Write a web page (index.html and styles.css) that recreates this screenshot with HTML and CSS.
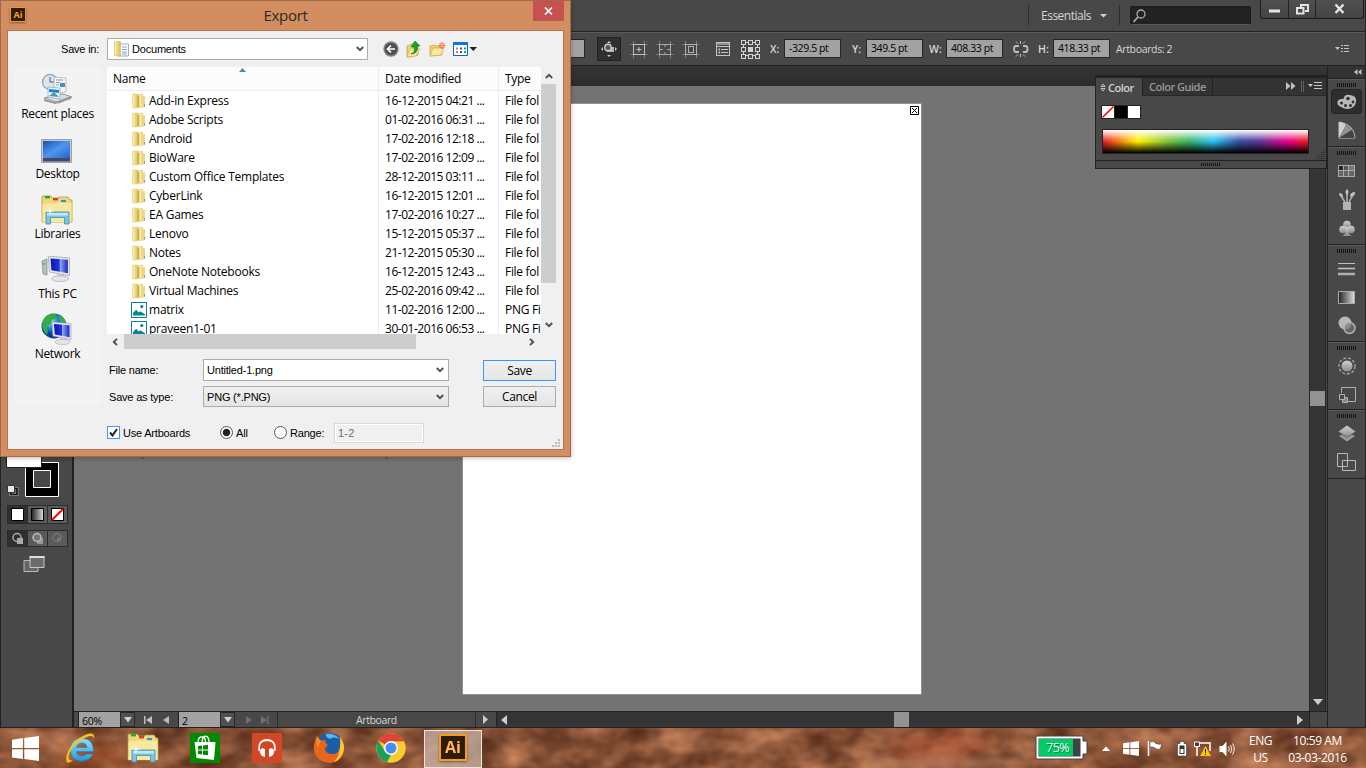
FILE: index.html
```html
<!DOCTYPE html>
<html lang="en">
<head>
<meta charset="utf-8">
<title>Export</title>
<link rel="stylesheet" href="styles.css">
</head>
<body>
<svg class="defs" width="0" height="0">
  <defs>
    <linearGradient id="gFold" x1="0" x2="1"><stop offset="0" stop-color="#fff3b0"/><stop offset="1" stop-color="#d9bb53"/></linearGradient>
    <linearGradient id="gGray" x1="0" x2="0" y1="0" y2="1"><stop offset="0" stop-color="#d0d0d0"/><stop offset="1" stop-color="#8c8c8c"/></linearGradient>
    <linearGradient id="gBW" x1="0" x2="1"><stop offset="0" stop-color="#222"/><stop offset="1" stop-color="#ddd"/></linearGradient>
    <linearGradient id="gScreen" x1="0" x2="1" y1="0" y2="1"><stop offset="0" stop-color="#1c4fb8"/><stop offset=".5" stop-color="#4d97ec"/><stop offset="1" stop-color="#2a62cc"/></linearGradient>
    <linearGradient id="gPc" x1="0" x2="1"><stop offset="0" stop-color="#0912b4"/><stop offset=".5" stop-color="#1e38dc"/><stop offset=".55" stop-color="#8fa6f5"/><stop offset="1" stop-color="#1424c4"/></linearGradient>
    <radialGradient id="gGlobe" cx=".35" cy=".3"><stop offset="0" stop-color="#a8e8ff"/><stop offset=".6" stop-color="#1f86d8"/><stop offset="1" stop-color="#0b3f96"/></radialGradient>
    <linearGradient id="gIe" x1="0" x2="0" y1="0" y2="1"><stop offset="0" stop-color="#8be0fb"/><stop offset="1" stop-color="#1c9be0"/></linearGradient>
    <symbol id="folder" viewBox="0 0 14 16">
      <path d="M.5 1h5l1 1v12l-2 1h-4z" fill="url(#gFold)" stroke="#e8cf78" stroke-width=".6"/>
      <path d="M6 1.500l5-.8v2.600h2v10.700l-6.600 1.500z" fill="#ebd681"/>
      <path d="M5.600 3v11.800l1.300-1.500V3z" fill="#c2a54c"/><path d="M7.500 2.300l2-.5v12.300l-2 .6z" fill="#f7eaa8"/>
      <path d="M12.600 11v2.500" stroke="#4ba3c7" stroke-width=".9"/>
    </symbol>
    <symbol id="picture" viewBox="0 0 16 16">
      <rect x=".5" y=".5" width="15" height="15" fill="#fff" stroke="#0e8294"/>
      <path d="M2 13.500V11l3.200-3.200 2.600 2.700 1.500-1.200 4.700 3v1.200z" fill="#0e8294"/><circle cx="10.800" cy="4.600" r="1.600" fill="#0e8294"/>
    </symbol>
    <symbol id="library" viewBox="0 0 32 30">
      <path d="M1 4V2q0-1 1-1h8l2 2h6V2h9l2 3h2v22H1z" fill="#f0d878" stroke="#b49746" stroke-width=".8"/>
      <path d="M4 1h5v2.400H4z" fill="#12b22c"/><path d="M12 3h5v2.400h-5z" fill="#dc3b2c"/><path d="M20 5h5v2.400h-5z" fill="#2a95e8"/>
      <path d="M1.500 9q14-3 29-1v19h-29z" fill="#f8e89c"/>
      <path d="M5 17h23v12h-4.500v-6.500h-14V29H5z" fill="#7cc4e3" stroke="#4c96bd" stroke-width=".9"/><path d="M6 18h21v2.500H6z" fill="#c1e9f8"/>
      <path d="M9 11l.8 4.200L14 16l-4.200.8L9 21l-.8-4.200L4 16l4.200-.8z" fill="#fff"/>
    </symbol>
    <symbol id="winlogo" viewBox="0 0 26 24">
      <path d="M0 3.500L10.500 2v9.500H0zM11.800 1.800L26 0v11.500H11.800zM0 12.700h10.500V22L0 20.600zM11.800 12.700H26V24l-14.200-2z" fill="#fff"/>
    </symbol>
    <symbol id="chev" viewBox="0 0 8 6"><path d="M.8 1l3.200 3.200L7.200 1" fill="none" stroke="#505050" stroke-width="1.900"/></symbol>
    <symbol id="grip" viewBox="0 0 20 4"><path d="M0 2h20" stroke="#151515" stroke-width="4" stroke-dasharray="1 1"/></symbol>
    <symbol id="monitor" viewBox="0 0 22 25">
      <path d="M1 2l19 1.500v16L2 16z" fill="#e4e6ea" stroke="#a4a8b0" stroke-width=".7"/><path d="M3 4l15.500 1.200v12L3.800 14.400z" fill="url(#gPc)"/>
      <path d="M9 18l6 1v3l-6-1z" fill="#bfc3c8"/><ellipse cx="11.500" cy="22" rx="7.500" ry="2.600" fill="#e4e5e8" stroke="#a9abb0" stroke-width=".6"/>
    </symbol>
  </defs>
</svg>

<div class="app">
  <header class="topbar">
    <div class="workspace">Essentials <svg width="7" height="5"><path d="M0 1h7L3.500 4.500z" fill="#d0d0d0"/></svg></div>
    <div class="search"><svg width="14" height="14" fill="none" stroke="#aaa"><circle cx="8" cy="5" r="4" stroke-width="1.300"/><path d="M5 8l-4.500 5" stroke-width="1.800"/></svg></div>
    <div class="winbtns">
      <span class="wb wb-min"><svg width="11" height="14"><path d="M0 7.500h11v3H0z" fill="#e4e4e4"/></svg></span>
      <span class="wb wb-max"><svg width="13" height="11" fill="none" stroke="#e4e4e4" stroke-width="2"><path d="M5 3V1h7v6H9M1 4h6.500v5.500H1z"/></svg></span>
      <span class="wb wb-close"><svg width="12" height="10" stroke="#e4e4e4" stroke-width="2.400"><path d="M1.500.5l8 8.500M9.500.5l-8 8.500"/></svg></span>
    </div>
  </header>

  <div class="controlbar">
    <span class="field f-hidden"></span>
    <span class="toolbox"><svg width="18" height="18"><path d="M9 1l2 2H7zM9 17l2-2H7zM1 9l2-2v4zM17 9l-2-2v4z" fill="#c8c8c8"/><path d="M7 7h7v5H7z" fill="#b4b4b4"/><circle cx="8" cy="7.500" r="3.200" fill="#555" stroke="#ccc" stroke-width="1.400"/></svg></span>
    <svg class="cicon" width="26" height="18" fill="none" stroke="#c0c0c0"><path d="M4.500 4.500h3M18.500 4.500h3M4.500 14.500h3M18.500 14.500h3M7.500 1v3M18.500 1v3M7.500 15v3M18.500 15v3" stroke="#808080"/><rect x="7.500" y="4.500" width="11" height="10"/><path d="M13 7v5M10.500 9.500h5"/></svg>
    <svg class="cicon" width="26" height="18" fill="none" stroke="#a8a8a8"><path d="M4.500 4.500h3M18.500 4.500h3M4.500 14.500h3M18.500 14.500h3M7.500 1v3M18.500 1v3M7.500 15v3M18.500 15v3" stroke="#808080"/><rect x="7.500" y="4.500" width="11" height="10"/><path d="M13 4v3M13 12v3M8 9.500h3M15 9.500h3"/></svg>
    <svg class="cicon" width="26" height="18" fill="none" stroke="#b0b0b0"><path d="M4.500 4.500h3M18.500 4.500h3M4.500 14.500h3M18.500 14.500h3M7.500 1v3M18.500 1v3M7.500 15v3M18.500 15v3" stroke="#808080"/><rect x="7.500" y="4.500" width="11" height="10"/><rect x="10.500" y="6.500" width="5" height="6"/></svg>
    <svg class="cicon c-list" width="26" height="16" fill="none" stroke="#c4c4c4"><rect x="6.500" y="1.500" width="13" height="13"/><path d="M7 3h12" stroke-width="2" stroke="#909090"/><path d="M7 5.500h12M11 8.500h7M11 11.500h7"/><path d="M8.500 8.500h1.500M8.500 11.500h1.500" stroke-width="2"/></svg>
    <svg class="cicon c-ref" width="27" height="20" fill="none" stroke="#d2d2d2" stroke-width="1"><path d="M6.500 3.500h14v13h-14z"/><g fill="#4a4a4a"><rect x="4.500" y="1.500" width="4" height="4"/><rect x="11.500" y="1.500" width="4" height="4"/><rect x="18.500" y="1.500" width="4" height="4"/><rect x="4.500" y="8.500" width="4" height="4"/><rect x="18.500" y="8.500" width="4" height="4"/><rect x="4.500" y="15.500" width="4" height="4"/><rect x="11.500" y="15.500" width="4" height="4"/><rect x="18.500" y="15.500" width="4" height="4"/></g><path d="M11 8h5v5h-5z" fill="#d2d2d2" stroke="none"/></svg>
    <label class="lab lab-x">X:</label><span class="field">-329.5 pt</span>
    <label class="lab lab-y">Y:</label><span class="field">349.5 pt</span>
    <label class="lab lab-w">W:</label><span class="field">408.33 pt</span>
    <svg class="cicon" width="35" height="16" fill="none" stroke="#bcbcbc"><path d="M16 5h-3q-2 0-2 3t2 3h3M20 5h2.500q2 0 2 3t-2 3H20" stroke-width="1.800"/><path d="M17.500 0v3M17.500 13v3M13 .5l2 2M22 .5l-2 2M13 15.500l2-2M22 15.500l-2-2"/></svg>
    <label class="lab lab-h">H:</label><span class="field">418.33 pt</span>
    <span class="abcount">Artboards: 2</span>
    <svg class="flymenu" width="15" height="10"><path d="M0 3h5L2.500 6z" fill="#c4c4c4"/><path d="M6 1.500h2M9 1.500h5M6 4.500h2M9 4.500h5M6 7.500h2M9 7.500h5" stroke="#c4c4c4"/></svg>
  </div>

  <div class="work">
    <aside class="tools">
      <svg width="71" height="60">
        <path d="M24.500 17.500h33v34h-33z" fill="#000" stroke="#fff"/><path d="M32.500 25.500h17v17h-17z" fill="#484848" stroke="#fff"/>
        <path d="M5 0h36v22H5z" fill="#fff"/><path d="M5.500 0v22.500h35V0" fill="none" stroke="#222"/>
        <path d="M10 43.500h6v6h-6z" fill="none" stroke="#999" stroke-width="3"/><path d="M10 43.500h6v6h-6z" fill="none" stroke="#111" stroke-width="1.600"/><path d="M6.500 40.500h7v7h-7z" fill="#e8e8e8" stroke="#333"/>
      </svg>
      <div class="triple modes">
        <span class="on"><svg width="13" height="13"><path d="M.5.500h12v12H.5z" fill="#fff" stroke="#000"/></svg></span>
        <span><svg width="13" height="13"><path d="M.5.500h12v12H.5z" fill="url(#gBW)" stroke="#000"/></svg></span>
        <span><svg width="13" height="13"><path d="M.5.500h12v12H.5z" fill="#fff" stroke="#000"/><path d="M1 12L12 1" stroke="#f00" stroke-width="2"/></svg></span>
      </div>
      <div class="triple draws">
        <span class="on"><svg width="14" height="13"><circle cx="6" cy="5.500" r="4" fill="none" stroke="#aaa" stroke-width="1.500"/><path d="M6 6h6v6H6z" fill="#aaa"/></svg></span>
        <span><svg width="14" height="13"><path d="M6 6h6v6H6z" fill="#999"/><circle cx="6" cy="5.500" r="4" fill="#777" stroke="#bbb" stroke-width="1.500"/></svg></span>
        <span><svg width="14" height="13"><circle cx="6" cy="5.500" r="4" fill="none" stroke="#777" stroke-width="1.300"/><path d="M6 5.500h4v4H6z" fill="#777"/></svg></span>
      </div>
      <svg class="screenmode" width="24" height="18"><path d="M1 5.500h14v11H1z" fill="#666" stroke="#b8b8b8"/><path d="M7 1.500h14v11H7z" fill="#6c6c6c" stroke="#c8c8c8"/><path d="M6.500 2h15" stroke="#ddd" stroke-width="2"/></svg>
    </aside>

    <main class="doc">
      <div class="tabstrip"></div>
      <div class="viewrow">
        <div class="canvas">
          <div class="artboard"><svg class="abclose" width="9" height="9"><path d="M.5.500h8v8H.5z" fill="#fff" stroke="#000"/><path d="M2 2l5 5M7 2L2 7" stroke="#000"/></svg></div>
          <i class="tick t1"></i><i class="tick t2"></i>
        </div>
        <div class="vbar"><span class="vthumb"></span><svg class="vdown" width="10" height="8"><path d="M0 1h10L5 7z" fill="#ccc"/></svg></div>
      </div>
      <div class="status">
        <span class="sfield">60%</span><span class="scaret"><svg width="8" height="6"><path d="M0 0h8L4 5.500z" fill="#d0d0d0"/></svg></span>
        <svg class="nav" width="42" height="16"><path d="M8 4h1.500v8H8zM16 4v8l-6-4zM33 4v8l-6-4z" fill="#bdbdbd"/></svg>
        <span class="sfield">2</span><span class="scaret"><svg width="8" height="6"><path d="M0 0h8L4 5.500z" fill="#d0d0d0"/></svg></span>
        <svg class="nav" width="42" height="16"><path d="M10 4v8l6-4zM25 4v8l6-4zM31 4h1.500v8H31z" fill="#707070"/></svg>
        <span class="sname">Artboard</span>
        <span class="splay"><svg width="6" height="9"><path d="M0 0l5 4.500L0 9z" fill="#ccc"/></svg></span>
        <div class="hbar"><svg width="7" height="10"><path d="M6 0v10L0 5z" fill="#ccc"/></svg><span class="hthumb"></span><svg class="hright" width="7" height="10"><path d="M0 0v10l6-5z" fill="#ccc"/></svg></div>
        <span class="corner"></span>
      </div>
    </main>

    <aside class="dock">
      <div class="dockhead"><svg width="8" height="6"><path d="M3.500 0v6L0 3zM7.500 0v6L4 3z" fill="#c0c0c0"/></svg></div>
      <div class="dgroup">
        <svg class="grip" width="20" height="4"><use href="#grip"/></svg>
        <span class="dcell sel"><svg width="20" height="16"><path d="M1 11Q-1 6 4 5q3 0 3-1.500Q8 0 13 1q7 1 6 7-1 6-8 7-5 0-10-4z" fill="#b8b8b8"/><g fill="#303030"><circle cx="4.500" cy="9" r="1.500"/><circle cx="8.500" cy="11.500" r="1.500"/><circle cx="13.500" cy="11.500" r="1.500"/><circle cx="16" cy="8" r="1.400"/><circle cx="11" cy="4.500" r="1.800"/></g></svg></span>
        <span class="dcell"><svg width="18" height="19"><path d="M1 1v16h16Q16 3 1 1z" fill="#555" stroke="#c4c4c4"/><path d="M1 1q4 0 7 3L1 17z" fill="#d0d0d0"/><path d="M8 4q4 2 6 5L1 17z" fill="#929292"/><path d="M14 9q2 3 2.500 8H1z" fill="#444"/></svg></span>
      </div>
      <div class="dgroup">
        <svg class="grip" width="20" height="4"><use href="#grip"/></svg>
        <span class="dcell"><svg width="17" height="12"><path d="M0 0h17v12H0z" fill="#aaa"/><path d="M1 1h4v4H1z" fill="#222"/><path d="M6 1h4v4H6z" fill="#555"/><path d="M11 1h5v4h-5z" fill="#777"/><path d="M1 6h4v5H1zM6 6h4v5H6zM11 6h5v5h-5z" fill="#666"/></svg></span>
        <span class="dcell"><svg width="18" height="22"><path d="M5 13h8v8H5z" fill="#b4b4b4"/><path d="M7 13L3 7M9 13V5M11 13l4-7" stroke="#b4b4b4" stroke-width="1.500"/><path d="M1 4q4 0 4 4-4 0-4-4zM9 0q3 3 0 6-3-3 0-6zM12 8q0-5 5-5 1 4-5 5z" fill="#c0c0c0"/></svg></span>
        <span class="dcell"><svg width="18" height="17"><g fill="url(#gGray)"><circle cx="9" cy="4.500" r="3.800"/><circle cx="5" cy="9.500" r="3.800"/><circle cx="13" cy="9.500" r="3.800"/><path d="M8 7h2l.5 6 3 3h-9l3-3z"/></g></svg></span>
      </div>
      <div class="dgroup">
        <svg class="grip" width="20" height="4"><use href="#grip"/></svg>
        <span class="dcell"><svg width="17" height="14"><path d="M0 1.500h17" stroke="#c0c0c0"/><path d="M0 6.500h17" stroke="#c0c0c0" stroke-width="1.600"/><path d="M0 12h17" stroke="#b0b0b0" stroke-width="2.500"/></svg></span>
        <span class="dcell"><svg width="17" height="13"><path d="M.5.500h16v12H.5z" fill="url(#gBW)" stroke="#aaa"/></svg></span>
        <span class="dcell"><svg width="18" height="19"><circle cx="7" cy="7" r="6.500" fill="#b8b8b8"/><circle cx="11.500" cy="12" r="5.500" fill="#777a" stroke="#b0b0b0" stroke-width="1.500"/></svg></span>
      </div>
      <div class="dgroup">
        <svg class="grip" width="20" height="4"><use href="#grip"/></svg>
        <span class="dcell"><svg width="18" height="18"><circle cx="9" cy="9" r="5.500" fill="url(#gGray)"/><circle cx="9" cy="9" r="8" fill="none" stroke="#aaa" stroke-width="1.300" stroke-dasharray="3 1.800"/></svg></span>
        <span class="dcell"><svg width="18" height="18" fill="none" stroke="#b0b0b0"><path d="M3.500 7V1.500h14v14H10"/><path d="M4.500 11.500h5v5h-5z" fill="#888"/><path d="M1.500 8.500h5v5h-5z" fill="#484848"/></svg></span>
      </div>
      <div class="dgroup last">
        <svg class="grip" width="20" height="4"><use href="#grip"/></svg>
        <span class="dcell"><svg width="18" height="18"><path d="M1 11l3-1.500 5 3 5-3 3 1.500-8 5.500z" fill="#999"/><path d="M9 .5l8.500 6L9 12 .5 6.500z" fill="url(#gGray)"/></svg></span>
        <span class="dcell"><svg width="19" height="19" fill="#4a4a4a" stroke="#b8b8b8"><path d="M.5.500h10v13H.5zM5.500 7.500h13v10h-13z"/></svg></span>
      </div>
    </aside>
  </div>

  <section class="colorpanel">
    <div class="cphead">
      <span class="cptab act"><svg width="6" height="9" fill="none" stroke="#c0c0c0"><path d="M1 3.500l2-2.500 2 2.500zM1 5.500l2 2.500 2-2.500z"/></svg>Color</span>
      <span class="cptab">Color Guide</span>
      <svg class="cpmenu" width="38" height="12"><path d="M0 2v8l4.500-4zM5 2v8l4.500-4z" fill="#c0c0c0"/><path d="M15.500 1v11M17.500 1v11" stroke="#606060"/><path d="M22 4h5l-2.500 3z" fill="#c8c8c8"/><path d="M28 2.500h8M28 5.500h8M28 8.500h8" stroke="#c8c8c8"/></svg>
    </div>
    <div class="cpbody">
      <svg class="chips" width="40" height="14"><path d="M0 0h40v14H0z" fill="#222"/><path d="M1 1h12v12H1zM27 1h12v12H27z" fill="#fff"/><path d="M14 1h12v12H14z" fill="#000"/><path d="M1.500 12.500L12.500 1.500" stroke="#f00" stroke-width="1.600"/></svg>
      <div class="spectrum"></div>
      <svg class="rs" width="10" height="10"><path d="M9 1v9M7 3v7M5 5v5M3 7v3M1 9v1" stroke="#222" stroke-dasharray="1 1"/></svg>
    </div>
    <div class="cpfoot"><svg width="20" height="3" viewBox="0 0 20 3"><path d="M0 1.500h20" stroke="#151515" stroke-width="3" stroke-dasharray="1 1"/></svg></div>
  </section>
</div>

<footer class="taskbar">
  <svg class="wallpaper" width="1366" height="40">
    <filter id="leaves" x="0" y="0" width="100%" height="100%" color-interpolation-filters="sRGB"><feTurbulence type="fractalNoise" baseFrequency=".026 .04" numOctaves="3" seed="8"/><feColorMatrix values=".65 0 0 0 .215  .5 0 0 0 .08  .38 0 0 0 .03  0 0 0 0 1"/></filter>
    <filter id="soft"><feGaussianBlur stdDeviation="6"/></filter>
    <rect width="1366" height="40" filter="url(#leaves)"/>
    <g filter="url(#soft)"><path d="M60 24l45-8 40 22H60z" fill="#d8652a" opacity=".35"/><path d="M890 15l60-18 45 15-35 28h-60z" fill="#c24e24" opacity=".35"/><path d="M870 36l60-6 70 4v8H870z" fill="#d09a78" opacity=".6"/></g>
  </svg>
  <nav class="apps">
    <span class="tapp start"><svg width="27" height="25"><use href="#winlogo"/></svg></span>
    <span class="tapp"><svg width="32" height="32" viewBox="0 0 32 32"><path d="M28.500 19.500H11.500q.5 4.500 5 4.500 3.500 0 4.500-2h7Q25 29 16 29 5.500 28.500 5.500 18 5.500 6.500 17 6.500q11.500 0 11.500 13zM11.500 15.500h10.500q-.5-4.500-5-4.500t-5.500 4.500z" fill="url(#gIe)" stroke="#1b7cc0" stroke-width=".5" fill-rule="evenodd"/><path d="M8 28.500Q-1 35 2 22 7 8 21 2.500q9-3.500 8 4-1-3.500-6-2Q9 10 4 22q-2 7 4 6.500z" fill="#f8c21c"/></svg></span>
    <span class="tapp"><svg width="32" height="30"><use href="#library"/></svg></span>
    <span class="tapp"><svg width="30" height="30"><path d="M0 0h30v30H0z" fill="#008a00"/><path d="M4.500 9h21L24 27 6.500 25z" fill="#fff"/><path d="M8 9q.5-6 4.500-5 3 .5 3 5M12 9q.5-7 5-5.500Q19 5 19 9" fill="none" stroke="#fff" stroke-width="1.300"/><path d="M8 13l4-.5v4H8zM13 12.400l5-.6v4.700h-5zM8 17.500h4v4L8 21zM13 17.500h5v4.800l-5-.6z" fill="#008a00"/></svg></span>
    <span class="tapp"><svg width="30" height="30"><path d="M0 0h30v30H0z" fill="#d24726"/><path d="M7.500 18Q5.500 7.500 15 7q9.500.5 7.500 11" fill="none" stroke="#fff" stroke-width="1.800"/><path d="M10 15l3 1v8l-3-1q-4-4 0-8zM20 15l-3 1v8l3-1q4-4 0-8z" fill="#fff"/></svg></span>
    <span class="tapp"><svg width="32" height="32"><circle cx="17" cy="15" r="14" fill="#1d5ca8"/><path d="M13 2q8-1 14 5-7-3-10 0-5-2-4-5z" fill="#55b9ec"/><path d="M27 5q5 6 4 13-2 12-14 13Q3 30 1 18 0 12 4 4l2 5 6-1q0 3 3 5l-3 3q0 6 8 6 9 0 7-17z" fill="#e8651c"/><path d="M27 5q6 8 3 16-3 7-9 9 5-6 5-10 2-6 1-15z" fill="#fcc72c"/><path d="M4 4q-2 7 1 12l3-7z" fill="#f58a20"/></svg></span>
    <span class="tapp"><svg width="30" height="30"><circle cx="15" cy="15" r="14.700" fill="#f9cb2f"/><path d="M15 15L2.300 7.600Q7 0 15 .3q9 .2 12.900 7.700H15z" fill="#db4437"/><path d="M2.300 7.600L9 18.500l6 3-4 7.700Q1 26 .3 15q0-4 2-7.400z" fill="#1ba05a"/><path d="M15 8h13" stroke="#c53929" stroke-width=".5"/><circle cx="15" cy="15" r="6.900" fill="#fff"/><circle cx="15" cy="15" r="5.500" fill="#4a8af4"/></svg></span>
    <span class="tapp"><span class="running"><span class="ailogo big">Ai</span></span></span>
  </nav>
  <div class="tray">
    <svg class="batt" width="58" height="28"><path d="M3 2h47v5h4v13h-4v5H3z" fill="#fff" stroke="#444"/><path d="M5.500 4.500h42v18h-42z" fill="#404244"/><path d="M6 5h34v17H6z" fill="#00cc66"/><text x="13" y="18" class="pct">75%</text></svg>
    <svg width="24" height="20"><path d="M8 13h8l-4-4.500z" fill="#fff"/></svg>
    <svg width="26" height="20"><use href="#winlogo" x="5" y="3" width="16" height="15"/></svg>
    <svg width="24" height="20"><path d="M4.500 3v15" stroke="#fff" stroke-width="1.500"/><path d="M6 4q3-1 5 0v1q3 2 7 1l-2 5q-3 1-5-1-2-1.500-5-1z" fill="#fff" stroke="#333" stroke-width=".5"/></svg>
    <svg width="26" height="20"><path d="M9.500 5.500H12v-2h4v2h2.500V18h-9z" fill="#fff" stroke="#333" stroke-width=".6"/><path d="M11.500 7.500h5V16h-5z" fill="#333"/><path d="M12.500 11h3v4h-3z" fill="#fff"/></svg>
    <svg width="20" height="20"><path d="M5 5h11v8M3 9v9" fill="none" stroke="#fff" stroke-width="1.500"/><path d="M.5 4h5v4.500h-5z" fill="#553829" stroke="#fff"/><path d="M11.500 8l5.500 10H6z" fill="#ffc40c"/><path d="M11.500 11v4M11.500 16v1" stroke="#222"/></svg>
    <svg width="26" height="20"><path d="M5.500 8h3l4-4.500v15L8.500 14h-3z" fill="#fff"/><path d="M14.500 8.500q1.500 2.500 0 5M16.500 7q2.500 4 0 8M18.500 5.500q3.500 5.500 0 11" fill="none" stroke="#fff" stroke-width=".9"/></svg>
    <div class="tlines lang"><span>ENG</span><span>US</span></div>
    <div class="tlines clock"><span>10:59 AM</span><span>03-03-2016</span></div>
  </div>
</footer>

<section class="dialog">
  <div class="titlebar">
    <span class="ailogo">Ai</span><span class="title">Export</span>
    <span class="close"><svg width="9" height="8" stroke="#fff" stroke-width="1.700"><path d="M1 .5l7 7M8 .5l-7 7"/></svg></span>
  </div>
  <div class="client">
    <div class="looks">
      <label class="savein">Save in:</label>
      <div class="combo c-top"><svg width="15" height="16"><path d="M4 3h10.500v12H4z" fill="#fff" stroke="#8a98a8" stroke-width=".8"/><path d="M8 6h5M8 8.500h5M8 11h5M8 13h5" stroke="#7ca0d0"/><path d="M.5 1l6-.8V15l-6-.5z" fill="url(#gFold)" stroke="#d4b95a" stroke-width=".6"/></svg><span>Documents</span><svg class="cv" width="8" height="6"><use href="#chev"/></svg></div>
      <svg class="lk" width="96" height="18">
        <circle cx="8" cy="9" r="7.700" fill="#888"/><circle cx="8" cy="9" r="6.300" fill="#505050"/><path d="M8 5.500L4.500 9 8 12.500M4.500 9H12" fill="none" stroke="#fff" stroke-width="1.700"/>
        <path d="M24 6l5-2 6 1v10l-9 2h-2z" fill="#efd56c" stroke="#b99936" stroke-width=".7"/><path d="M24 17l3-8h10l-4 7z" fill="#fae99b" stroke="#c0a145" stroke-width=".5"/><path d="M28 14q5-2 3-7h-3l4-6 5 5h-3q2 7-6 8z" fill="#18a32c" stroke="#087018" stroke-width=".6"/>
        <path d="M47 6l5-1 1 1h6v9l-12 1z" fill="#efcf68" stroke="#bc983d" stroke-width=".6"/><path d="M47 16l3-8h11l-3 7z" fill="#fae89c" stroke="#c8a750" stroke-width=".6"/><path d="M59 2v7M55.500 5.500h7M56.500 3l5 5M61.500 3l-5 5" stroke="#ef5b20" stroke-width="1"/><circle cx="59" cy="5.500" r="1.400" fill="#ffb070"/>
        <path d="M70.500 3.500h14v12h-14z" fill="#fff" stroke="#0868b8"/><path d="M70 2h15v3H70z" fill="#1074d8"/><path d="M73 8.500h2M73 12h2" stroke="#e8783c" stroke-width="2"/><path d="M77 8.500h2M77 12h2" stroke="#324fac" stroke-width="2"/><path d="M81 8.500h2M81 12h2" stroke="#239b58" stroke-width="2"/><path d="M86.500 7H94l-3.700 4z" fill="#222"/>
      </svg>
    </div>
    <div class="mid">
      <nav class="places">
        <div class="place"><svg width="32" height="32"><path d="M3 25l19-4 9 3-13 6z" fill="#ddd" stroke="#999"/><circle cx="9" cy="9" r="7.500" fill="#dbe7ee" stroke="#9eacb6" stroke-width="1.500"/><path d="M9 4v5h4" fill="none" stroke="#557"/><path d="M13 4l12 1v14l-12 2z" fill="#f4f4f4" stroke="#aaa" stroke-width=".7"/><path d="M15 7h7M15 9.500h4M15 12h3" stroke="#999"/><path d="M19 10h5v4h-5z" fill="#3a91c8"/><path d="M7 14l12 1v11l-12-2z" fill="#e9f6fc" stroke="#6da0bc" stroke-width=".6"/><path d="M8 16l10 1v3l-10-1z" fill="#2380d0"/><path d="M8 23l5-4 5 5z" fill="#48a0a0"/><path d="M3 26l11 3v2L3 28zM14 29l16-6v3l-16 5z" fill="#999"/></svg><span>Recent places</span></div>
        <div class="place"><svg width="32" height="32"><path d="M.5 6.500h30v23H.5z" fill="#c0c6d2" stroke="#9da3ae"/><path d="M2 8h27v17H2z" fill="url(#gScreen)"/><path d="M2 25h27v3.500H2z" fill="#3e4a66"/></svg><span>Desktop</span></div>
        <div class="place"><svg width="32" height="32"><use href="#library" y="2" width="32" height="30"/></svg><span>Libraries</span></div>
        <div class="place"><svg width="32" height="32"><path d="M1 8l5-2v16l-4-1z" fill="#b9bdc2" stroke="#777" stroke-width=".6"/><path d="M3 10v2" stroke="#28c82c" stroke-width="1.500"/><use href="#monitor" x="5" y="1" width="27" height="28"/></svg><span>This PC</span></div>
        <div class="place"><svg width="32" height="32"><circle cx="13" cy="13" r="12.500" fill="url(#gGlobe)"/><path d="M4 4q6-5 10-3l2 4-5 2-1 4-5 2 2 5-1 4Q-2 14 4 4zM17 2q6 1 8 8l-6-1z" fill="#35ae3b"/><use href="#monitor" x="10" y="7" width="22" height="25"/></svg><span>Network</span></div>
      </nav>
      <div class="right">
        <div class="listbox">
          <div class="files">
            <div class="frow fhead"><span class="cn">Name<svg class="sort" width="7" height="4"><path d="M0 4l3.500-4L7 4z" fill="#4f8cab"/></svg></span><span class="cd">Date modified</span><span class="ct">Type</span></div>
            <div class="frow"><span class="cn"><svg class="fi"><use href="#folder"/></svg>Add-in Express</span><span class="cd">16-12-2015 04:21 ...</span><span class="ct">File fol</span></div>
            <div class="frow"><span class="cn"><svg class="fi"><use href="#folder"/></svg>Adobe Scripts</span><span class="cd">01-02-2016 06:31 ...</span><span class="ct">File fol</span></div>
            <div class="frow"><span class="cn"><svg class="fi"><use href="#folder"/></svg>Android</span><span class="cd">17-02-2016 12:18 ...</span><span class="ct">File fol</span></div>
            <div class="frow"><span class="cn"><svg class="fi"><use href="#folder"/></svg>BioWare</span><span class="cd">17-02-2016 12:09 ...</span><span class="ct">File fol</span></div>
            <div class="frow"><span class="cn"><svg class="fi"><use href="#folder"/></svg>Custom Office Templates</span><span class="cd">28-12-2015 03:11 ...</span><span class="ct">File fol</span></div>
            <div class="frow"><span class="cn"><svg class="fi"><use href="#folder"/></svg>CyberLink</span><span class="cd">16-12-2015 12:01 ...</span><span class="ct">File fol</span></div>
            <div class="frow"><span class="cn"><svg class="fi"><use href="#folder"/></svg>EA Games</span><span class="cd">17-02-2016 10:27 ...</span><span class="ct">File fol</span></div>
            <div class="frow"><span class="cn"><svg class="fi"><use href="#folder"/></svg>Lenovo</span><span class="cd">15-12-2015 05:37 ...</span><span class="ct">File fol</span></div>
            <div class="frow"><span class="cn"><svg class="fi"><use href="#folder"/></svg>Notes</span><span class="cd">21-12-2015 05:30 ...</span><span class="ct">File fol</span></div>
            <div class="frow"><span class="cn"><svg class="fi"><use href="#folder"/></svg>OneNote Notebooks</span><span class="cd">16-12-2015 12:43 ...</span><span class="ct">File fol</span></div>
            <div class="frow"><span class="cn"><svg class="fi"><use href="#folder"/></svg>Virtual Machines</span><span class="cd">25-02-2016 09:42 ...</span><span class="ct">File fol</span></div>
            <div class="frow"><span class="cn"><svg class="fi"><use href="#picture"/></svg>matrix</span><span class="cd">11-02-2016 12:00 ...</span><span class="ct">PNG Fi</span></div>
            <div class="frow"><span class="cn"><svg class="fi"><use href="#picture"/></svg>praveen1-01</span><span class="cd">30-01-2016 06:53 ...</span><span class="ct">PNG Fi</span></div>
          </div>
          <div class="lv"><svg class="up" width="8" height="6"><use href="#chev"/></svg><span></span><svg width="8" height="6"><use href="#chev"/></svg></div>
          <div class="lh"><svg class="lf" width="8" height="6"><use href="#chev"/></svg><span></span><svg class="rt" width="8" height="6"><use href="#chev"/></svg></div>
        </div>
        <div class="form">
          <label>File name:</label><div class="combo c-name"><span>Untitled-1.png</span><svg class="cv" width="8" height="6"><use href="#chev"/></svg></div><span class="btn primary">Save</span>
          <label>Save as type:</label><div class="combo c-type"><span>PNG (*.PNG)</span><svg class="cv" width="8" height="6"><use href="#chev"/></svg></div><span class="btn">Cancel</span>
        </div>
        <div class="opts">
          <span class="chk"><svg width="9" height="9"><path d="M1 4.500l2.500 3L8 1" fill="none" stroke="#222" stroke-width="2"/></svg></span><label class="o1">Use Artboards</label>
          <span class="rad sel"></span><label class="o2">All</label>
          <span class="rad"></span><label class="o3">Range:</label>
          <span class="range">1-2</span>
        </div>
      </div>
    </div>
    <svg class="sizer" width="8" height="8"><path d="M6 0h2v2H6zM3 3h2v2H3zM6 3h2v2H6zM0 6h2v2H0zM3 6h2v2H3zM6 6h2v2H6z" fill="#bcbcbc"/></svg>
  </div>
</section>
</body>
</html>
```
FILE: styles.css
```css
* { box-sizing: border-box; }
body { margin: 0; width: 1366px; height: 768px; overflow: hidden; position: relative; font-family: "Open Sans", "Noto Sans", sans-serif; font-size: 12px; }
svg { display: block; flex: none; }
.defs { position: absolute; }

/* application frame */
.app { height: 728px; display: flex; flex-direction: column; background: #484848; position: relative; color: #d6d6d6; border-bottom: 1px solid #222; border-right: 1px solid #222; }
.topbar { height: 31px; display: flex; padding-left: 1028px; flex: none; }
.workspace { width: 92px; height: 20px; margin-top: 5px; border-left: 1px solid #2c2c2c; border-right: 1px solid #2c2c2c; padding-left: 12px; display: flex; align-items: center; gap: 9px; font-size: 12px; letter-spacing: -.5px; }
.search { width: 121px; height: 19px; margin: 6px 0 0 10px; background: #222; border: 1px solid #1c1c1c; border-bottom-color: #5a5a5a; border-radius: 2px; padding: 2px; }
.winbtns { display: flex; height: 19px; margin-left: 9px; border: 1px solid #1c1c1c; border-top: 0; border-radius: 0 0 3px 3px; background: linear-gradient(#505050, #444); }
.wb { display: flex; align-items: center; justify-content: center; border-right: 1px solid #222; }
.wb-min { width: 28px; } .wb-max { width: 27px; } .wb-close { width: 47px; border: 0; }

.controlbar { height: 34px; flex: none; display: flex; align-items: center; padding-left: 520px; border-top: 1px solid #222; box-shadow: inset 0 1px #5a5a5a; font-size: 10.500px; }
.field { width: 57px; height: 19px; background: #a2a2a2; border: 1px solid #262626; color: #000; padding-left: 4px; line-height: 17px; white-space: nowrap; flex: none; letter-spacing: -.4px; font-weight: 500; }
.f-hidden { width: 65px; }
.toolbox { width: 24px; height: 24px; margin: 0 5px 0 12px; background: #303030; border: 1px solid #222; display: flex; align-items: center; justify-content: center; }
.c-list { margin-left: 6px; } .c-ref { margin-left: 1px; }
.lab { flex: none; font-weight: 600; }
.lab-x { width: 20px; padding-left: 6px; } .lab-y { width: 25px; padding-left: 11px; } .lab-w { width: 23px; padding-left: 6px; } .lab-h { width: 15px; }
.abcount { padding-left: 6px; font-weight: 500; letter-spacing: -.35px; white-space: nowrap; }
.flymenu { margin: 0 15px 0 auto; }

.work { flex: 1; display: flex; min-height: 0; }
.tools { width: 74px; flex: none; padding-top: 379px; border: solid #222; border-width: 1px 2px 0 1px; }
.triple { display: flex; width: 61px; margin-left: 6px; border: 1px solid #2c2c2c; background: #2c2c2c; gap: 1px; }
.triple span { flex: 1; display: flex; align-items: center; justify-content: center; background: #5a5a5a; }
.triple .on { background: #303030; }
.modes { height: 19px; } .draws { height: 17px; margin-top: 6px; }
.screenmode { margin: 8px 0 0 22px; }

.doc { flex: 1; display: flex; flex-direction: column; min-width: 0; }
.tabstrip { height: 21px; background: linear-gradient(#353535, #2c2c2c); border-top: 1px solid #222; }
.viewrow { flex: 1; display: flex; }
.canvas { flex: 1; background: #737373; position: relative; }
.artboard { position: absolute; left: 388px; top: 17px; width: 460px; height: 592px; background: #fff; border: 1px solid #929292; }
.abclose { position: absolute; right: 2px; top: 2px; }
.tick { position: absolute; top: 371px; width: 1px; height: 2px; background: #444; }
.t1 { left: 68px; } .t2 { left: 312px; }
.vbar { width: 17px; background: #353535; border: solid #262626; border-width: 0 1px; display: flex; flex-direction: column; align-items: center; justify-content: space-between; padding: 305px 0 5px; margin-right: 2px; }
.vthumb { width: 15px; height: 15px; background: #929292; }
.status { height: 16px; flex: none; display: flex; padding-left: 4px; border-top: 1px solid #222; font-size: 10.500px; }
.sfield { width: 43px; background: #a2a2a2; color: #000; padding: 2px 0 0 3px; line-height: 14px; border-left: 1px solid #222; letter-spacing: -.3px; }
.scaret { width: 15px; border: 1px solid #282828; display: flex; align-items: center; justify-content: center; background: #505050; margin-left: -1px; margin-right: 1px; }
.sname { width: 199px; text-align: center; border: 1px solid #2c2c2c; border-width: 0 1px; line-height: 16px; margin-left: -1px; letter-spacing: -.4px; }
.splay { width: 20px; display: flex; align-items: center; justify-content: center; }
.hbar { flex: 1; background: #353535; display: flex; align-items: center; padding: 0 5px 0 4px; border-left: 1px solid #222; }
.hthumb { width: 15px; height: 15px; background: #929292; margin-left: 386px; }
.hright { margin-left: auto; }
.corner { width: 18px; background: #484848; border-left: 1px solid #222; margin-right: 1px; }

.dock { width: 38px; flex: none; border-left: 1px solid #222; border-top: 1px solid #222; margin-left: -1px; }
.dockhead { height: 12px; background: #333; padding: 3px 3px 0; display: flex; justify-content: flex-end; }
.dgroup { border-top: 1px solid #222; box-shadow: inset 0 1px #5a5a5a; padding: 4px 3px 1px; height: 97.500px; }
.dgroup:nth-child(2), .dgroup:nth-child(5) { height: 68px; }
.dgroup.last { height: 70px; border-bottom: 1px solid #222; }
.grip { margin: 0 auto 2px; }
.dcell { height: 28.500px; display: flex; align-items: center; justify-content: center; }
.dcell.sel { height: 25px; margin-bottom: 2px; background: #2e2e2e; border: 1px solid #252525; border-radius: 3px; }

.colorpanel { position: absolute; left: 1095px; top: 75px; width: 232px; height: 94px; background: #484848; border: 1px solid #222; border-top: 3px solid #222; }
.cphead { height: 18px; background: #333; display: flex; align-items: stretch; font-size: 11px; font-weight: 600; border-bottom: 1px solid #282828; }
.cptab { display: flex; align-items: center; gap: 2px; padding: 0 7px 1px 6px; border-right: 1px solid #222; color: #989898; letter-spacing: -.5px; white-space: nowrap; width: 70px; }
.cptab.act { background: #484848; color: #d4d4d4; padding: 0 0 0 4px; margin-bottom: -1px; width: 47px; }
.cpmenu { margin: 2px 2px 0 auto; }
.cpbody { height: 64px; padding: 9px 0 0 5px; position: relative; }
.spectrum { width: 207px; height: 25px; margin: 10px 0 0 1px; border: 1px solid #222; background: linear-gradient(#fff, #fff0 48%, #0000 50%, #000), linear-gradient(90deg, #ed1c24, #fff200 17%, #6fbe44 34%, #39b56a 42%, #27c4f4 54%, #3850a4 66%, #5a3a98 76%, #ec008c 90%, #ed1c24); }
.rs { position: absolute; right: 1px; bottom: 1px; }
.cpfoot { border-top: 1px solid #222; display: flex; justify-content: center; padding-top: 2px; }

/* taskbar */
.taskbar { height: 40px; position: relative; display: flex; justify-content: space-between; color: #fff; background: #885238; }
.wallpaper { position: absolute; left: 0; top: 0; }
.apps { display: flex; position: relative; }
.tapp { width: 62px; height: 40px; display: flex; align-items: center; justify-content: center; }
.start { width: 50px; }
.running { width: 58px; height: 38px; background: #dcccc49a; border: 1px solid #f0e6e0; display: flex; justify-content: center; padding-top: 3px; margin-top: 1px; }
.ailogo { width: 16px; height: 15px; border: 1px solid #f59b1d; background: #2e1c0a; color: #f8a52c; font: bold 9px/13px "Open Sans", sans-serif; text-align: center; box-shadow: 0 1px 2px #0006; }
.ailogo.big { width: 28px; height: 27px; border-width: 2px; font: bold 16px/22px "Open Sans", sans-serif; color: #ffb84d; }
.tray { position: relative; display: flex; align-items: center; padding-right: 12px; }
.batt { margin-right: 3px; }
.pct { font: 12.500px "Open Sans", sans-serif; fill: #fff; letter-spacing: -.5px; text-shadow: 1px 1px #0006; }
.tlines { display: flex; flex-direction: column; align-items: center; line-height: 17px; white-space: nowrap; letter-spacing: -.4px; padding-top: 1px; }
.lang { width: 41px; } .clock { width: 73px; }

/* dialog window */
.dialog { position: absolute; left: 0; top: 0; width: 571px; height: 457px; background: #d28e61; border: 1px solid #a36a48; padding: 0 6px 6px; color: #000; box-shadow: 0 1px 5px #0004; }
.titlebar { height: 29px; display: flex; position: relative; align-items: center; justify-content: center; padding-bottom: 1px; }
.titlebar > .ailogo { position: absolute; left: 3px; top: 6px; }
.title { font-size: 15px; line-height: 20px; color: #2f2823; letter-spacing: -.3px; }
.close { position: absolute; right: 0; top: 0; width: 31px; height: 20px; background: #c75050; display: flex; align-items: center; justify-content: center; }
.client { height: 420px; border: 1px solid #b5774f; background: #f0f0f0; position: relative; font-family: "Liberation Sans", Arial, sans-serif; font-size: 11px; letter-spacing: -.2px; }
.looks { padding: 7px 0 0 53px; display: flex; align-items: center; height: 29px; margin-bottom: 7px; }
.savein { width: 46px; }
.combo { display: flex; align-items: center; border: 1px solid #acacac; background: #fff; padding: 0 4px 0 3px; height: 22px; }
.cv { margin-left: auto; }
.c-top { width: 261px; padding-left: 6px; padding-right: 3px; gap: 3px; }
.lk { margin-left: 15px; }
.mid { display: flex; padding-left: 6px; }
.places { width: 87px; height: 338px; background: #f3f3f3; margin-right: 6px; font: 12px "Open Sans", sans-serif; padding-top: 6px; }
.place { height: 60px; display: flex; flex-direction: column; align-items: center; letter-spacing: -.3px; }
.place span { line-height: 18px; white-space: nowrap; }
.place svg { margin-right: 2px; }
.right { width: 449px; }
.listbox { display: grid; grid-template-columns: 434px 15px; grid-template-rows: 267px 15px; }
.files { background: #fff; overflow: hidden; font: 12px "Open Sans", sans-serif; }
.frow { height: 19px; display: grid; grid-template-columns: 272px 120px 42px; line-height: 19px; white-space: nowrap; }
.frow > span { border-right: 1px solid #e2effa; padding-left: 6px; letter-spacing: -.47px; }
.frow > .ct { border: 0; letter-spacing: -.3px; }
.frow > .cn { padding-left: 24px; display: flex; align-items: center; gap: 2px; letter-spacing: -.23px; }
.fi { width: 16px; height: 16px; }
.frow.fhead { height: 24px; line-height: 23px; background: #fcfcfc; border-bottom: 1px solid #e2effa; }
.frow.fhead > .cn { padding-left: 6px; position: relative; }
.frow.fhead > .cd { letter-spacing: -.25px; }
.sort { position: absolute; left: 132px; top: 1px; }
.lv { background: #f0f0f0; display: flex; flex-direction: column; align-items: center; padding: 6px 0; justify-content: space-between; }
.lv span { width: 15px; height: 199px; background: #cdcdcd; margin-bottom: 34px; }
.up { transform: rotate(180deg); }
.lh { display: flex; align-items: center; padding: 0 5px 0 4px; }
.lh span { width: 292px; height: 15px; background: #cdcdcd; margin-left: 5px; }
.lf { transform: rotate(90deg); } .rt { transform: rotate(-90deg); margin-left: auto; }
.form { display: grid; grid-template-columns: 96px 246px 107px; grid-template-rows: 22px 21px; row-gap: 5px; align-items: center; margin-top: 10px; }
.form label { padding-left: 2px; }
.form .btn { margin-left: 34px; width: 73px; height: 21px; border: 1px solid #acacac; background: linear-gradient(#f0f0f0, #e5e5e5); display: flex; align-items: center; justify-content: center; font: 12px "Open Sans", sans-serif; letter-spacing: -.35px; }
.form .primary { border-color: #3399ff; }
.c-type { height: 21px; background: linear-gradient(#f0f0f0, #e5e5e5); }
.opts { display: flex; align-items: center; margin-top: 15px; height: 21px; }
.chk { width: 13px; height: 13px; border: 1px solid #3399ff; background: #fff; padding: 1px; }
.rad { width: 13px; height: 13px; border: 1px solid #555; border-radius: 50%; background: #fff; flex: none; }
.rad.sel { background: radial-gradient(circle, #222 0 3.200px, #fff 4.200px); }
.o1 { width: 97px; margin-left: 3px; } .o2 { width: 38px; margin-left: 3px; } .o3 { width: 44px; margin-left: 3px; white-space: nowrap; }
.range { width: 90px; height: 20px; border: 1px solid #d9d9d9; box-shadow: inset 0 0 0 1px #fff; color: #6d6d6d; padding-left: 3px; line-height: 18px; letter-spacing: .2px; }
.sizer { position: absolute; right: 3px; bottom: 2px; }
```
